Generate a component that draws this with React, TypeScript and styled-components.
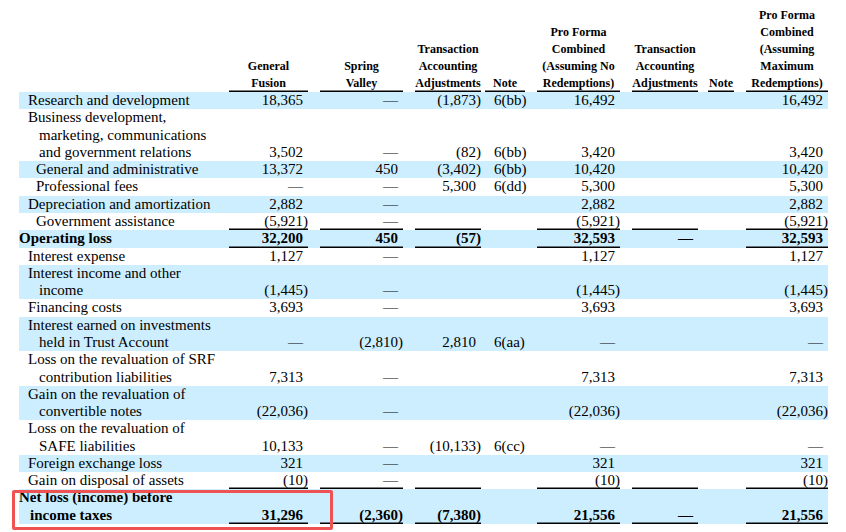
import { Fragment } from 'react';
import styled, { createGlobalStyle, css } from 'styled-components';

type Col = 'gf' | 'sv' | 'ta' | 'note' | 'pf' | 'ta2' | 'note2' | 'pf2';

type Line = {
    label: string[];
    level: 0 | 1 | 2;
    bold?: boolean;
    band?: boolean;
    values: Partial<Record<Col, string>>;
    rules?: Col[];
};

const GlobalStyle = createGlobalStyle`
    body {
        margin: 0;
        background: #fff;
        color: #000;
        font-family: 'Liberation Serif', 'Times New Roman', serif;
    }
`;

const Page = styled.div`
    position: relative;
    min-height: 532px;
    box-sizing: border-box;
    padding: 7px 0 0 19px;
    overflow: hidden;
`;

const Table = styled.table`
    width: 809px;
    table-layout: fixed;
    border-collapse: collapse;
    font-size: 15px;
    line-height: 17.28px;
`;

const rule = css`
    box-shadow: inset 0 -1.5px 0 #000;
`;

const HeadCell = styled.th<{ $rule?: boolean }>`
    padding: 0;
    font-size: 12px;
    font-weight: bold;
    line-height: 17px;
    text-align: center;
    vertical-align: bottom;
    white-space: nowrap;
    ${({ $rule }) => $rule && rule}
`;

const Row = styled.tr<{ $band?: boolean; $bold?: boolean }>`
    background: ${({ $band }) => ($band ? '#cceeff' : 'transparent')};
    font-weight: ${({ $bold }) => ($bold ? 'bold' : 'normal')};

    & > td {
        padding: 0;
        vertical-align: bottom;
        white-space: nowrap;
    }
`;

const indents = { 0: 11, 1: 20, 2: 28 };

const LabelCell = styled.td<{ $level: 0 | 1 | 2 }>`
    text-align: left;
    padding-left: ${({ $level }) => indents[$level]}px !important;
    text-indent: -11px;
`;

const NumCell = styled.td<{ $rule?: boolean }>`
    text-align: right;
    ${({ $rule }) => $rule && rule}
`;

const NoteCell = styled.td`
    text-align: left;
    padding-left: 9px !important;
`;

const Paren = styled.span`
    visibility: hidden;
`;

// the red marker drawn over the last row, an annotation on top of the table
const Highlight = styled.div`
    position: absolute;
    left: 12px;
    top: 490px;
    width: 321px;
    height: 40px;
    box-sizing: border-box;
    border: 3px solid #ef5252;
    border-radius: 2px;
    pointer-events: none;
`;

// column layout, left to right; gaps are spacer cells that carry the band colour
const layout: { key: Col | 'gap'; width: number }[] = [
    { key: 'gf', width: 79 },
    { key: 'gap', width: 12 },
    { key: 'sv', width: 83 },
    { key: 'gap', width: 12 },
    { key: 'ta', width: 66 },
    { key: 'gap', width: 4 },
    { key: 'note', width: 40 },
    { key: 'gap', width: 12 },
    { key: 'pf', width: 83 },
    { key: 'gap', width: 12 },
    { key: 'ta2', width: 66 },
    { key: 'gap', width: 10 },
    { key: 'note2', width: 26 },
    { key: 'gap', width: 12 },
    { key: 'pf2', width: 82 },
];

const headings: Record<Col, string[]> = {
    gf: ['General', 'Fusion'],
    sv: ['Spring', 'Valley'],
    ta: ['Transaction', 'Accounting', 'Adjustments'],
    note: ['Note'],
    pf: ['Pro Forma', 'Combined', '(Assuming No', 'Redemptions)'],
    ta2: ['Transaction', 'Accounting', 'Adjustments'],
    note2: ['Note'],
    pf2: ['Pro Forma', 'Combined', '(Assuming', 'Maximum', 'Redemptions)'],
};

const totals: Col[] = ['gf', 'sv', 'ta', 'pf', 'ta2', 'pf2'];

const lines: Line[] = [
    {
        label: ['Research and development'], level: 1, band: true,
        values: { gf: '18,365', sv: '—', ta: '(1,873)', note: '6(bb)', pf: '16,492', pf2: '16,492' },
    },
    {
        label: ['Business development,', 'marketing, communications', 'and government relations'], level: 1,
        values: { gf: '3,502', sv: '—', ta: '(82)', note: '6(bb)', pf: '3,420', pf2: '3,420' },
    },
    {
        label: ['General and administrative'], level: 2, band: true,
        values: { gf: '13,372', sv: '450', ta: '(3,402)', note: '6(bb)', pf: '10,420', pf2: '10,420' },
    },
    {
        label: ['Professional fees'], level: 2,
        values: { gf: '—', sv: '—', ta: '5,300', note: '6(dd)', pf: '5,300', pf2: '5,300' },
    },
    {
        label: ['Depreciation and amortization'], level: 1, band: true,
        values: { gf: '2,882', sv: '—', pf: '2,882', pf2: '2,882' },
    },
    {
        label: ['Government assistance'], level: 2,
        values: { gf: '(5,921)', sv: '—', pf: '(5,921)', pf2: '(5,921)' },
        rules: totals,
    },
    {
        label: ['Operating loss'], level: 0, bold: true, band: true,
        values: { gf: '32,200', sv: '450', ta: '(57)', pf: '32,593', ta2: '—', pf2: '32,593' },
        rules: ['gf', 'sv', 'ta', 'pf', 'pf2'],
    },
    {
        label: ['Interest expense'], level: 1,
        values: { gf: '1,127', sv: '—', pf: '1,127', pf2: '1,127' },
    },
    {
        label: ['Interest income and other', 'income'], level: 1, band: true,
        values: { gf: '(1,445)', sv: '—', pf: '(1,445)', pf2: '(1,445)' },
    },
    {
        label: ['Financing costs'], level: 1,
        values: { gf: '3,693', sv: '—', pf: '3,693', pf2: '3,693' },
    },
    {
        label: ['Interest earned on investments', 'held in Trust Account'], level: 1, band: true,
        values: { gf: '—', sv: '(2,810)', ta: '2,810', note: '6(aa)', pf: '—', pf2: '—' },
    },
    {
        label: ['Loss on the revaluation of SRF', 'contribution liabilities'], level: 1,
        values: { gf: '7,313', sv: '—', pf: '7,313', pf2: '7,313' },
    },
    {
        label: ['Gain on the revaluation of', 'convertible notes'], level: 1, band: true,
        values: { gf: '(22,036)', sv: '—', pf: '(22,036)', pf2: '(22,036)' },
    },
    {
        label: ['Loss on the revaluation of', 'SAFE liabilities'], level: 1,
        values: { gf: '10,133', sv: '—', ta: '(10,133)', note: '6(cc)', pf: '—', pf2: '—' },
    },
    {
        label: ['Foreign exchange loss'], level: 1, band: true,
        values: { gf: '321', sv: '—', pf: '321', pf2: '321' },
    },
    {
        label: ['Gain on disposal of assets'], level: 1,
        values: { gf: '(10)', sv: '—', pf: '(10)', pf2: '(10)' },
        rules: totals,
    },
    {
        label: ['Net loss (income) before', 'income taxes'], level: 0, bold: true, band: true,
        values: { gf: '31,296', sv: '(2,360)', ta: '(7,380)', pf: '21,556', ta2: '—', pf2: '21,556' },
        rules: totals,
    },
];

// positive figures keep the room of a closing paren so they line up with negatives
const figure = (value?: string) => {
    if (!value) return null;
    if (value.endsWith(')')) return value;
    return <>{value}<Paren>)</Paren></>;
};

const App = () => {
    return (
        <Page>
            <GlobalStyle />
            <Table>
                <colgroup>
                    <col style={{ width: 210 }} />
                    {layout.map((c, i) => <col key={i} style={{ width: c.width }} />)}
                </colgroup>
                <thead>
                    <tr>
                        <HeadCell />
                        {
                            layout.map((c, i) => {
                                if (c.key === 'gap') return <HeadCell key={i} />;
                                return (
                                    <HeadCell key={i} $rule>
                                        {headings[c.key].map((t, j) => <Fragment key={j}>{j > 0 && <br />}{t}</Fragment>)}
                                    </HeadCell>
                                );
                            })
                        }
                    </tr>
                </thead>
                <tbody>
                    {
                        lines.map((line, r) => (
                            <Row key={r} $band={line.band} $bold={line.bold}>
                                <LabelCell $level={line.level}>
                                    {line.label.map((t, j) => <Fragment key={j}>{j > 0 && <br />}{t}</Fragment>)}
                                </LabelCell>
                                {
                                    layout.map((c, i) => {
                                        if (c.key === 'gap') return <td key={i} />;
                                        if (c.key === 'note' || c.key === 'note2') {
                                            return <NoteCell key={i}>{line.values[c.key]}</NoteCell>;
                                        }
                                        return (
                                            <NumCell key={i} $rule={line.rules?.includes(c.key)}>
                                                {figure(line.values[c.key])}
                                            </NumCell>
                                        );
                                    })
                                }
                            </Row>
                        ))
                    }
                </tbody>
            </Table>
            <Highlight />
        </Page>
    );
};

export default App;
